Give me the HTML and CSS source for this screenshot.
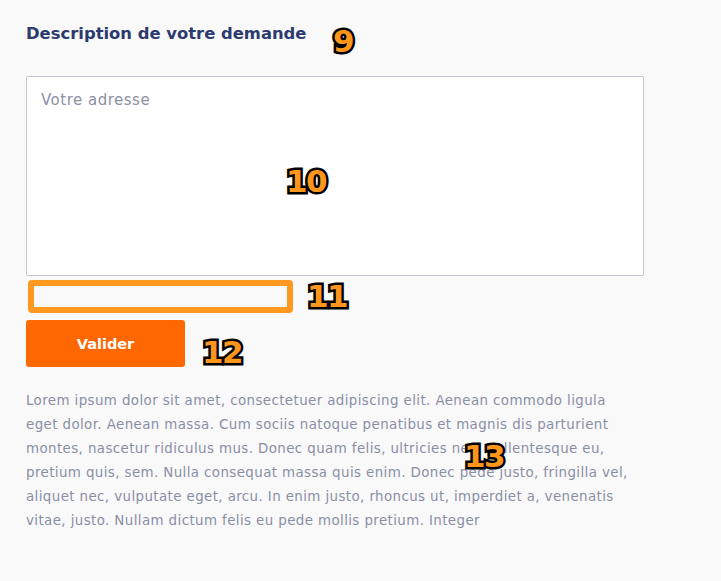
FILE: index.html
```html
<!DOCTYPE html>
<html lang="fr">
<head>
<meta charset="utf-8">
<link rel="stylesheet" href="styles.css">
</head>
<body>
<main class="form">
  <h2 class="title">Description de votre demande</h2>
  <div class="field">
    <textarea class="address" placeholder="Votre adresse"></textarea>
  </div>
  <div class="error-slot"></div>
  <button class="submit" type="button">Valider</button>
  <p class="note">Lorem ipsum dolor sit amet, consectetuer adipiscing elit. Aenean commodo ligula eget dolor. Aenean massa. Cum sociis natoque penatibus et magnis dis parturient montes, nascetur ridiculus mus. Donec quam felis, ultricies nec, pellentesque eu, pretium quis, sem. Nulla consequat massa quis enim. Donec pede justo, fringilla vel, aliquet nec, vulputate eget, arcu. In enim justo, rhoncus ut, imperdiet a, venenatis vitae, justo. Nullam dictum felis eu pede mollis pretium. Integer</p>

  <span class="marker m9">9</span>
  <span class="marker m10">10</span>
  <span class="marker m11">11</span>
  <span class="marker m12">12</span>
  <span class="marker m13">13</span>
</main>
</body>
</html>
```

FILE: styles.css
```css
html, body {
  margin: 0;
  padding: 0;
  background: #f9f9f9;
}
body {
  font-family: "DejaVu Sans", "Noto Sans", sans-serif;
  width: 721px;
  height: 581px;
  overflow: hidden;
}
.form {
  position: relative;
  padding: 22px 0 0 26px;
  width: 617px;
  display: flex;
  flex-direction: column;
}
.title {
  margin: 0;
  font-size: 16.4px;
  font-weight: 600;
  color: #2c3a6e;
  line-height: 23px;
}
.field {
  margin-top: 31px;
}
.address {
  display: block;
  box-sizing: border-box;
  width: 618px;
  height: 200px;
  border: 1px solid #c4c6d6;
  border-radius: 2px;
  background: #ffffff;
  padding: 14px 14px;
  font-family: inherit;
  font-size: 15px;
  letter-spacing: 0.5px;
  color: #2c3a6e;
  resize: none;
  outline: none;
}
.address::placeholder {
  color: #8c90a4;
}
.error-slot {
  box-sizing: border-box;
  margin: 4px 0 0 2px;
  width: 265px;
  height: 33px;
  border: 6px solid #ff981f;
  border-radius: 4px;
}
.submit {
  margin-top: 7px;
  width: 159px;
  height: 47px;
  border: 0;
  border-radius: 3px;
  background: #ff6800;
  color: #ffffff;
  font-family: inherit;
  font-size: 14.5px;
  font-weight: 700;
  cursor: pointer;
}
.note {
  margin: 22px 0 0;
  max-width: 606px;
  font-size: 13.4px;
  letter-spacing: 0.4px;
  line-height: 24px;
  color: #8a8ea5;
}
.marker {
  position: absolute;
  font-family: "DejaVu Sans", sans-serif;
  font-weight: 700;
  font-size: 31px;
  line-height: 1;
  color: #ff961c;
  -webkit-text-stroke: 5px #000;
  paint-order: stroke fill;
  letter-spacing: -1.5px;
}
.m9 { left: 333px; top: 26px; }
.m10 { left: 286px; top: 166px; }
.m11 { left: 307px; top: 281px; }
.m12 { left: 202px; top: 337px; }
.m13 { left: 464px; top: 441px; }
```
